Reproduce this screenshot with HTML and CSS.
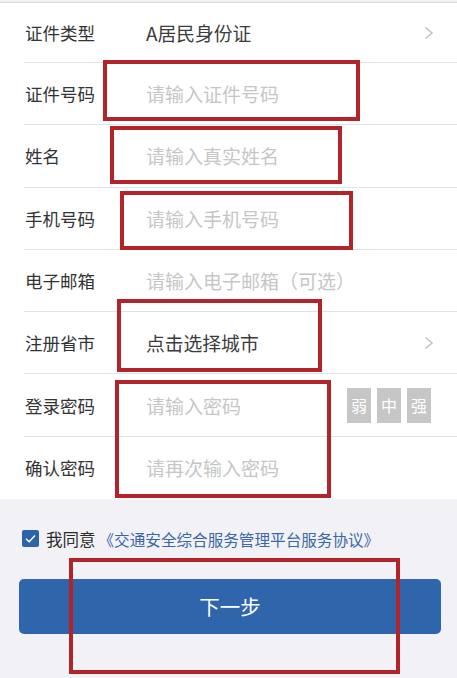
FILE: index.html
```html
<!DOCTYPE html>
<html lang="zh-CN">
<head>
<meta charset="utf-8">
<title>注册</title>
<link rel="stylesheet" href="styles.css">
</head>
<body>
<div class="page">
  <div class="form">
    <div class="row first">
      <span class="label">证件类型</span>
      <span class="value">A居民身份证</span>
      <svg class="chev" width="12" height="14" viewBox="0 0 12 14"><path d="M2.5 1.5 L9 7 L2.5 12.5" fill="none" stroke="#c4c4c4" stroke-width="1.6"/></svg>
    </div>
    <div class="row">
      <span class="label">证件号码</span>
      <span class="ph">请输入证件号码</span>
    </div>
    <div class="row">
      <span class="label">姓名</span>
      <span class="ph">请输入真实姓名</span>
    </div>
    <div class="row">
      <span class="label">手机号码</span>
      <span class="ph">请输入手机号码</span>
    </div>
    <div class="row">
      <span class="label">电子邮箱</span>
      <span class="ph">请输入电子邮箱（可选）</span>
    </div>
    <div class="row">
      <span class="label">注册省市</span>
      <span class="value">点击选择城市</span>
      <svg class="chev" width="12" height="14" viewBox="0 0 12 14"><path d="M2.5 1.5 L9 7 L2.5 12.5" fill="none" stroke="#c4c4c4" stroke-width="1.6"/></svg>
    </div>
    <div class="row">
      <span class="label">登录密码</span>
      <span class="ph">请输入密码</span>
      <div class="strength">
        <span class="lvl">弱</span>
        <span class="lvl">中</span>
        <span class="lvl">强</span>
      </div>
    </div>
    <div class="row last">
      <span class="label">确认密码</span>
      <span class="ph">请再次输入密码</span>
    </div>
  </div>
  <div class="footer">
    <div class="agree">
      <span class="check">
        <svg width="17" height="17" viewBox="0 0 17 17"><rect x="0" y="0" width="17" height="17" rx="2" fill="#2f63a8"/><path d="M4 8.8 L7.2 11.8 L13 5.6" fill="none" stroke="#fff" stroke-width="1.5"/></svg>
      </span>
      <span class="agree-text">我同意</span>
      <span class="agree-link">《交通安全综合服务管理平台服务协议》</span>
    </div>
    <button class="next">下一步</button>
  </div>
  <div class="mark m1"></div>
  <div class="mark m2"></div>
  <div class="mark m3"></div>
  <div class="mark m4"></div>
  <div class="mark m5"></div>
  <div class="mark m6"></div>
</div>
</body>
</html>
```
FILE: styles.css
```css
html, body {
  margin: 0;
  padding: 0;
  background: #ffffff;
}
body {
  font-family: "Noto Sans CJK SC", "Noto Sans", "Liberation Sans", sans-serif;
  color: #333333;
}
.page {
  position: relative;
  width: 457px;
  height: 678px;
  overflow: hidden;
  background: #f2f2f6;
}
.form {
  background: #ffffff;
  border-top: 1px solid #dcdcdc;
  margin-top: 2px;
}
.row {
  display: flex;
  align-items: center;
  height: 62.3px;
  box-sizing: border-box;
  margin-left: 24px;
  padding-right: 24px;
  border-bottom: 1px solid #e2e2e2;
}
.row.first {
  height: 60px;
}
.row.last {
  border-bottom: none;
  height: 62px;
}
.label {
  width: 121px;
  padding-left: 1px;
  font-size: 17.5px;
  color: #333333;
  flex: none;
}
.value {
  flex: 1;
  font-size: 18.8px;
  color: #3c3c3c;
}
.ph {
  flex: 1;
  font-size: 19px;
  color: #c6c6c6;
}
.chev {
  flex: none;
  margin-right: -2px;
}
.strength {
  display: flex;
  gap: 6px;
  margin-right: 2px;
}
.lvl {
  width: 24px;
  height: 35px;
  background: #c6c6c6;
  color: #ffffff;
  font-size: 16px;
  display: flex;
  align-items: center;
  justify-content: center;
}
.footer {
  padding: 30px 16px 0 19px;
}
.agree {
  display: flex;
  align-items: center;
  padding-left: 3px;
  height: 20px;
}
.check {
  display: flex;
  width: 17px;
  height: 17px;
  margin-right: 7px;
}
.agree-text {
  font-size: 16.5px;
  color: #2a2a2a;
  margin-right: 3px;
}
.agree-link {
  font-size: 15.6px;
  color: #3a66a6;
}
.next {
  display: block;
  width: 422px;
  height: 55px;
  margin-top: 30px;
  border: none;
  border-radius: 5px;
  background: #2f65ab;
  color: #ffffff;
  font-family: "Noto Sans CJK SC", "Noto Sans", sans-serif;
  font-size: 20.5px;
  padding: 0;
}
.mark {
  position: absolute;
  border: 4px solid #b3242a;
  box-sizing: border-box;
}
.m1 { left: 103px; top: 60px; width: 257px; height: 61px; }
.m2 { left: 110px; top: 126px; width: 232px; height: 58px; }
.m3 { left: 120px; top: 191px; width: 233px; height: 59px; }
.m4 { left: 117px; top: 299px; width: 205px; height: 73px; }
.m5 { left: 115px; top: 380px; width: 216px; height: 118px; }
.m6 { left: 69px; top: 558px; width: 331px; height: 116px; }
```
